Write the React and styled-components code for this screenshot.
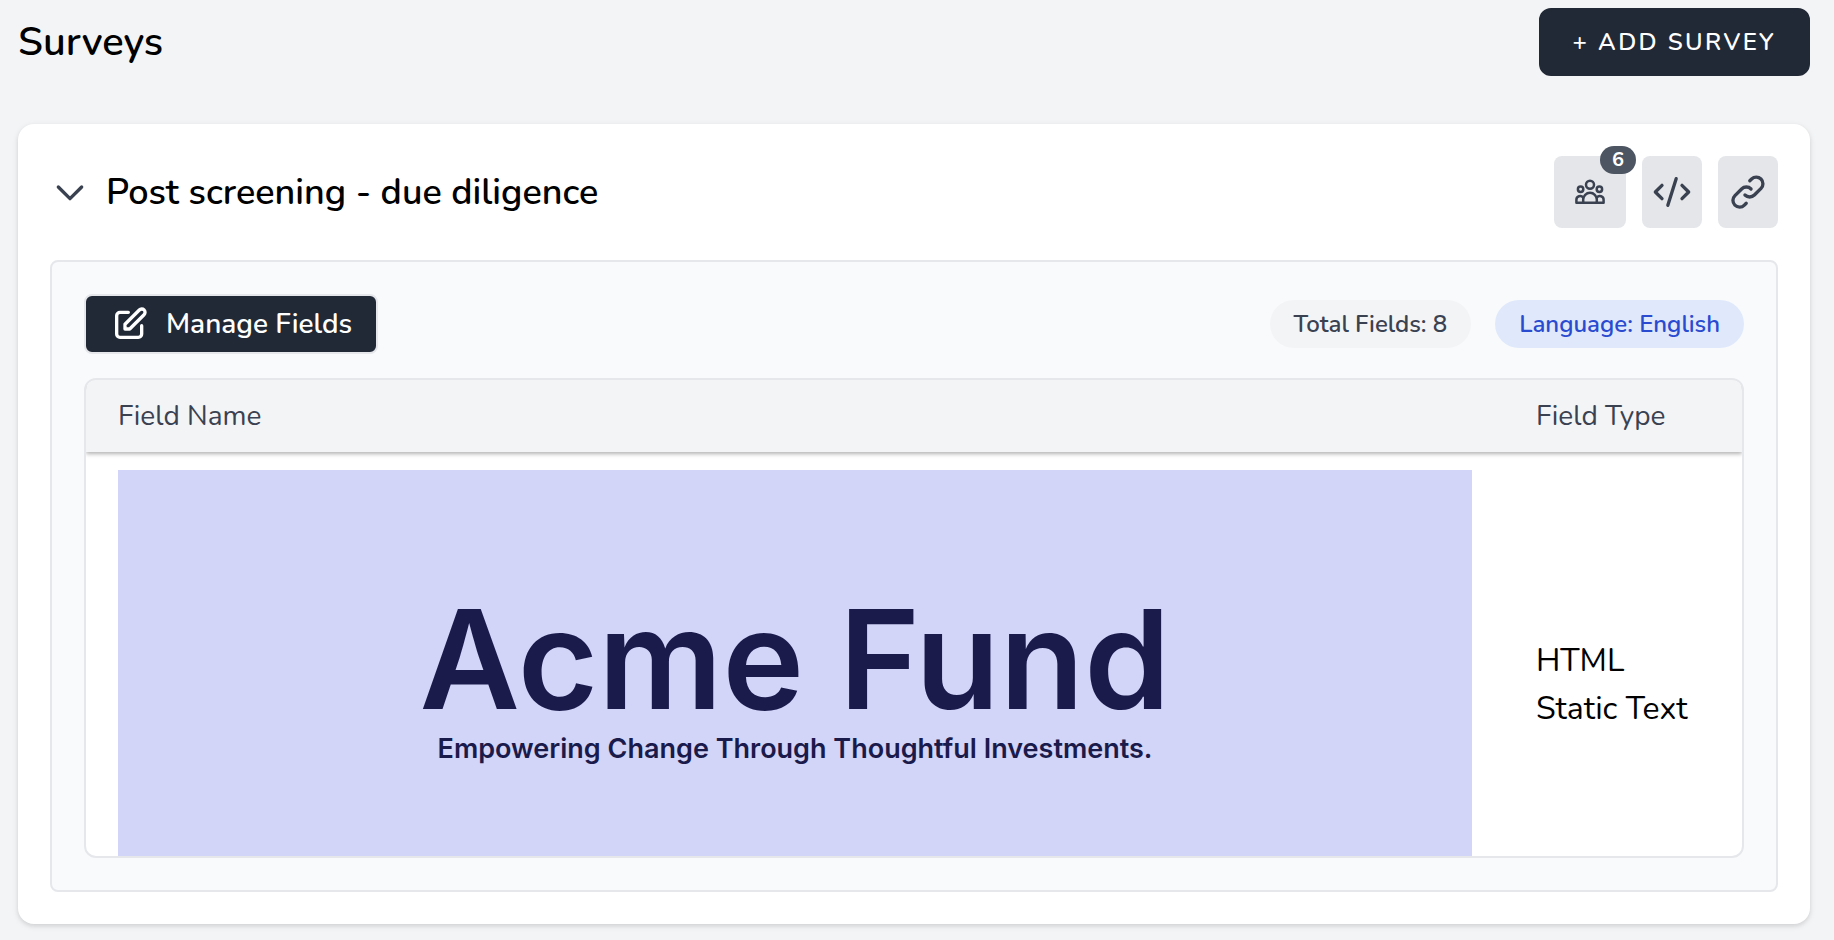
import React from "react";
import styled, { createGlobalStyle } from "styled-components";

const GlobalStyle = createGlobalStyle`
  *, *::before, *::after { box-sizing: border-box; }
  body {
    margin: 0;
    background: #f3f4f6;
    color: #000;
    font-family: Nunito, "Noto Sans", "Open Sans", sans-serif;
    font-size: 32px;
    line-height: 48px;
  }
  button { font-family: inherit; cursor: pointer; }
  h1, h2, p { margin: 0; }
`;

const Page = styled.main`
  padding: 8px 24px 16px 18px;
`;

const Header = styled.header`
  display: flex;
  align-items: center;
  justify-content: space-between;
  height: 68px;
  margin-bottom: 48px;
`;

const Title = styled.h1`
  font-size: 40px;
  font-weight: 600;
`;

const AddButton = styled.button`
  height: 68px;
  padding: 0 32px;
  border: 2px solid #222936;
  border-radius: 12px;
  background: #222936;
  color: #fff;
  font-size: 24px;
  font-weight: 600;
  letter-spacing: 0.1em;
  text-transform: uppercase;
`;

const Card = styled.section`
  padding: 32px;
  border-radius: 16px;
  background: #fff;
  box-shadow: 0 2px 6px rgba(0, 0, 0, 0.1), 0 2px 4px rgba(0, 0, 0, 0.06);
`;

const CardHeader = styled.div`
  display: flex;
  align-items: center;
  justify-content: space-between;
  margin-bottom: 32px;
`;

const CardTitle = styled.h2`
  font-size: 36px;
  font-weight: 600;
`;

const Toggle = styled.button`
  display: flex;
  align-items: center;
  gap: 16px;
  padding: 0;
  border: 0;
  background: none;
  color: #000;
  font-size: inherit;
  font-weight: inherit;

  svg { color: #3a4251; }
`;

const Actions = styled.div`
  display: flex;
  gap: 16px;
`;

const IconButton = styled.button`
  position: relative;
  display: flex;
  align-items: center;
  justify-content: center;
  width: ${(p) => (p.$wide ? 72 : 60)}px;
  height: 72px;
  padding: 0;
  border: 0;
  border-radius: 8px;
  background: #e5e6ea;
  color: #3a4251;
`;

const Count = styled.span`
  position: absolute;
  top: -10px;
  right: -10px;
  width: 36px;
  height: 28px;
  border-radius: 14px;
  background: #4d5562;
  color: #fff;
  font-size: 20px;
  font-weight: 700;
  line-height: 28px;
  text-align: center;
`;

const Panel = styled.div`
  padding: 32px;
  border: 2px solid #e5e7eb;
  border-radius: 8px;
  background: #f9fafc;
`;

const Toolbar = styled.div`
  display: flex;
  align-items: center;
  justify-content: space-between;
  margin-bottom: 24px;
`;

const ManageButton = styled.button`
  display: flex;
  align-items: center;
  gap: 16px;
  height: 60px;
  padding: 0 24px;
  border: 2px solid #e5e7eb;
  border-radius: 8px;
  background: #222936;
  color: #fff;
  font-size: 28px;
  font-weight: 600;
`;

const Pills = styled.div`
  display: flex;
  gap: 24px;
`;

const Pill = styled.span`
  height: 48px;
  padding: 0 24px;
  border-radius: 24px;
  background: ${(p) => (p.$accent ? "#dfe9fb" : "#f3f4f6")};
  color: ${(p) => (p.$accent ? "#2a4bd0" : "#3a4251")};
  font-size: 24px;
  font-weight: 600;
`;

const TableFrame = styled.div`
  overflow: hidden;
  height: 480px;
  border: 2px solid #e5e7eb;
  border-radius: 12px;
  background: #fff;
`;

const Table = styled.table`
  width: 100%;
  border-collapse: collapse;
`;

const Head = styled.thead`
  background: #f3f4f6;
  box-shadow: 0 2px 4px rgba(0, 0, 0, 0.3);
`;

const HeadCell = styled.th`
  width: ${(p) => (p.$narrow ? "238px" : "auto")};
  height: 72px;
  padding: 0 32px;
  color: #3a4251;
  font-size: 28px;
  font-weight: 400;
  text-align: left;
`;

const Cell = styled.td`
  padding: 18px 32px;
`;

const Banner = styled.div`
  display: flex;
  flex-direction: column;
  align-items: center;
  justify-content: center;
  height: 430px;
  padding-bottom: 8px;
  background: #d2d4f8;
  color: #1a1a4b;
  font-family: Inter, "Liberation Sans", sans-serif;
`;

const BannerName = styled.p`
  font-size: 138px;
  font-weight: 600;
  line-height: 136px;
  white-space: nowrap;
`;

const BannerTagline = styled.p`
  font-size: 27px;
  font-weight: 600;
  line-height: 44px;
`;

function Icon({ size = 40, box = 24, stroke = 2, children }) {
  return (
    <svg
      width={size}
      height={size}
      viewBox={`0 0 ${box} ${box}`}
      fill="none"
      stroke="currentColor"
      strokeWidth={stroke}
      strokeLinecap="round"
      strokeLinejoin="round"
      aria-hidden="true"
    >
      {children}
    </svg>
  );
}

function ChevronIcon() {
  return (
    <Icon>
      <path d="M19 9l-7 7-7-7" />
    </Icon>
  );
}

function PeopleIcon() {
  return (
    <Icon size={32} box={32} stroke={2.5}>
      <circle cx="16" cy="8.700" r="4" />
      <circle cx="6.600" cy="13.300" r="2.700" />
      <circle cx="25.400" cy="13.300" r="2.700" />
      <path d="M9.200 26.800v-3.200a6.800 6.800 0 0 1 13.600 0v3.200z" />
      <path d="M9.200 26.800H2.400v-3a3.700 3.700 0 0 1 6.700-2.200" />
      <path d="M22.800 26.800h6.800v-3a3.700 3.700 0 0 0-6.700-2.200" />
    </Icon>
  );
}

function CodeIcon() {
  return (
    <Icon>
      <path d="M18 16l4-4-4-4M6 8l-4 4 4 4M14.500 4l-5 16" />
    </Icon>
  );
}

function LinkIcon() {
  return (
    <Icon>
      <path d="M13.828 10.172a4 4 0 00-5.656 0l-4 4a4 4 0 105.656 5.656l1.102-1.101m-.758-4.899a4 4 0 005.656 0l4-4a4 4 0 00-5.656-5.656l-1.100 1.100" />
    </Icon>
  );
}

function EditIcon() {
  return (
    <Icon>
      <path d="M11 5H6a2 2 0 00-2 2v11a2 2 0 002 2h11a2 2 0 002-2v-5m-1.414-9.414a2 2 0 112.828 2.828L11.828 15H9v-2.828l8.586-8.586z" />
    </Icon>
  );
}

export default function App() {
  return (
    <>
      <GlobalStyle />
      <Page>
        <Header>
          <Title>Surveys</Title>
          <AddButton type="button">+ Add Survey</AddButton>
        </Header>
        <Card>
          <CardHeader>
            <CardTitle>
              <Toggle type="button" aria-expanded="true">
                <ChevronIcon />
                Post screening - due diligence
              </Toggle>
            </CardTitle>
            <Actions>
              <IconButton type="button" $wide aria-label="Respondents">
                <PeopleIcon />
                <Count>6</Count>
              </IconButton>
              <IconButton type="button" aria-label="Embed code">
                <CodeIcon />
              </IconButton>
              <IconButton type="button" aria-label="Copy link">
                <LinkIcon />
              </IconButton>
            </Actions>
          </CardHeader>
          <Panel>
            <Toolbar>
              <ManageButton type="button">
                <EditIcon />
                Manage Fields
              </ManageButton>
              <Pills>
                <Pill>Total Fields: 8</Pill>
                <Pill $accent>Language: English</Pill>
              </Pills>
            </Toolbar>
            <TableFrame>
              <Table>
                <Head>
                  <tr>
                    <HeadCell>Field Name</HeadCell>
                    <HeadCell $narrow>Field Type</HeadCell>
                  </tr>
                </Head>
                <tbody>
                  <tr>
                    <Cell>
                      <Banner>
                        <BannerName>Acme Fund</BannerName>
                        <BannerTagline>Empowering Change Through Thoughtful Investments.</BannerTagline>
                      </Banner>
                    </Cell>
                    <Cell>HTML<br />Static Text</Cell>
                  </tr>
                </tbody>
              </Table>
            </TableFrame>
          </Panel>
        </Card>
      </Page>
    </>
  );
}
